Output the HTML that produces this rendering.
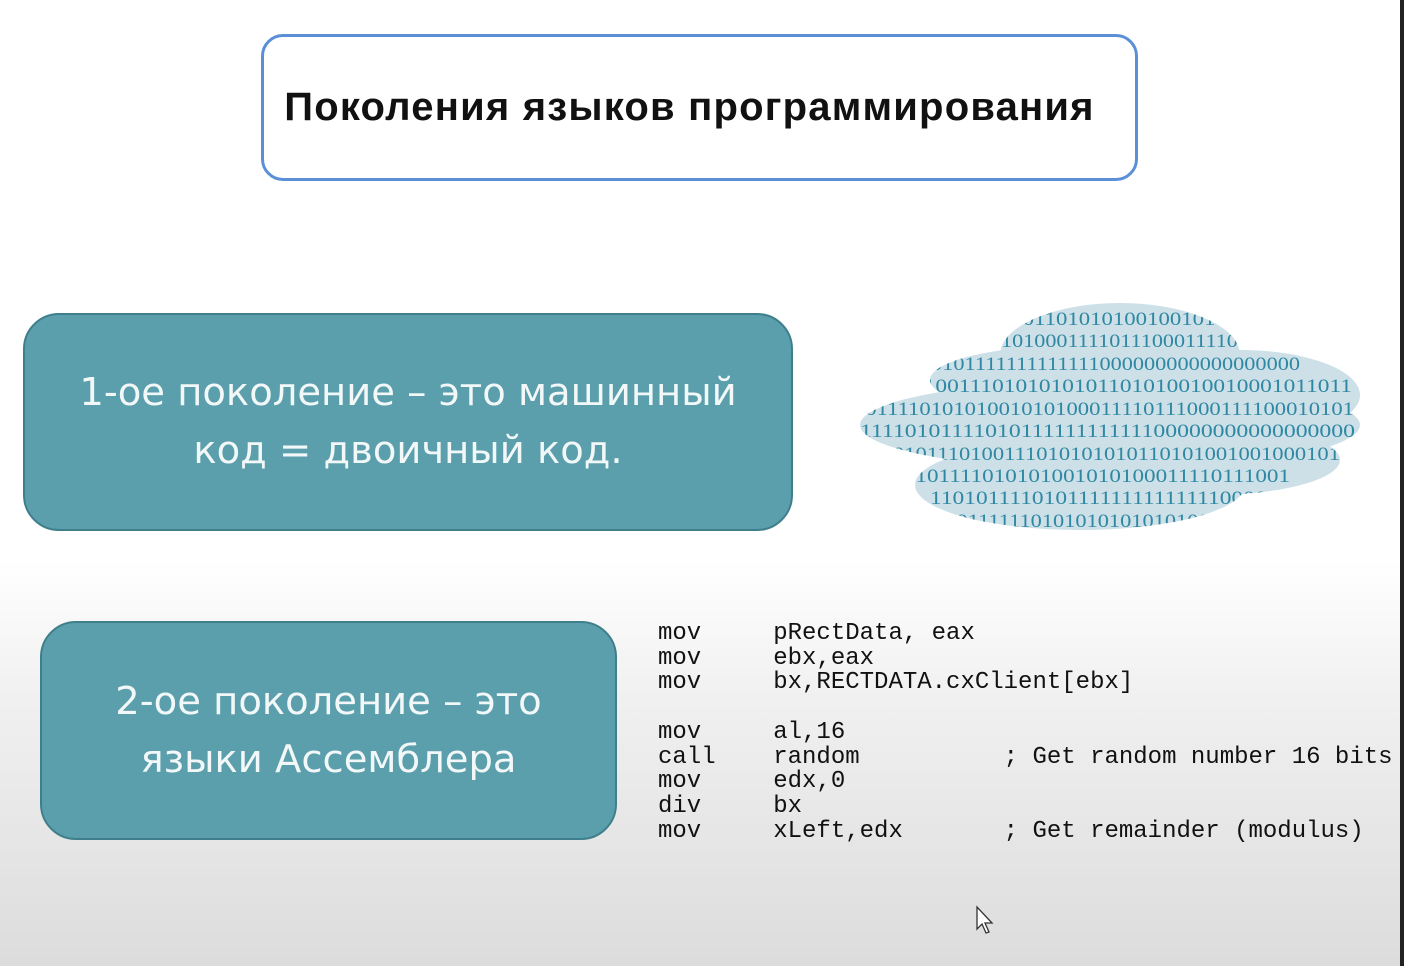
<!DOCTYPE html>
<html><head><meta charset="utf-8"><style>
body{margin:0;width:1404px;height:966px;overflow:hidden;font-family:"Liberation Sans",sans-serif;
background:linear-gradient(#fff 0,#fff 560px,#f0f0f0 700px,#dcdcdc 966px);position:relative}
.title{position:absolute;left:261px;top:34px;width:871px;height:141px;border:3px solid #5b8fd6;border-radius:22px;background:#fff;
display:flex;align-items:center;justify-content:center;font-weight:bold;font-size:40px;letter-spacing:1.2px;color:#111}
.title span{position:relative;left:-10px}
.box{position:absolute;background:#5b9fad;border:2px solid #3f7f8c;border-radius:36px;color:#f2f7f8;
font-family:"DejaVu Sans","Liberation Sans",sans-serif;font-size:38.5px;text-align:center;line-height:58px;display:flex;align-items:center;justify-content:center}
.code{position:absolute;left:658px;top:622px;font-family:"Liberation Mono",monospace;font-size:24px;line-height:24.7px;color:#111;white-space:pre}
.edge{position:absolute;right:0;top:0;width:4px;height:966px;background:#222}
</style></head><body>
<div class="title"><span>Поколения языков программирования</span></div>
<div class="box" style="left:23px;top:313px;width:766px;height:214px">1-ое поколение – это машинный<br>код = двоичный код.</div>
<div class="box" style="left:40px;top:621px;width:573px;height:215px">2-ое поколение – это<br>языки Ассемблера</div>
<svg style="position:absolute;left:850px;top:295px" width="520" height="250">
<defs><clipPath id="c">
<ellipse cx="260" cy="130" rx="250" ry="45"/><ellipse cx="270" cy="60" rx="120" ry="52"/><ellipse cx="230" cy="85" rx="150" ry="35"/>
<ellipse cx="390" cy="100" rx="120" ry="45"/><ellipse cx="230" cy="190" rx="165" ry="45"/><ellipse cx="360" cy="165" rx="130" ry="35"/>
</clipPath></defs>
<g clip-path="url(#c)"><rect width="520" height="250" fill="#cde0e8"/>
<g font-family="Liberation Serif,serif" font-size="19" fill="#2f88a3">
<text x="150" y="30" textLength="260" lengthAdjust="spacingAndGlyphs">01011010101001001010110</text>
<text x="140" y="52" textLength="270" lengthAdjust="spacingAndGlyphs">0101000111101110001111010</text>
<text x="70" y="75" textLength="380" lengthAdjust="spacingAndGlyphs">10101111111111111000000000000000000</text>
<text x="62" y="97" textLength="440" lengthAdjust="spacingAndGlyphs">01001110101010101101010010010001011011</text>
<text x="4" y="120" textLength="500" lengthAdjust="spacingAndGlyphs">101111010101001010100011110111000111100010101</text>
<text x="10" y="142" textLength="495" lengthAdjust="spacingAndGlyphs">1111010111101011111111111100000000000000000</text>
<text x="10" y="165" textLength="480" lengthAdjust="spacingAndGlyphs">0110101110100111010101010110101001001000101</text>
<text x="20" y="187" textLength="420" lengthAdjust="spacingAndGlyphs">1100101111010101001010100011110111001</text>
<text x="80" y="209" textLength="360" lengthAdjust="spacingAndGlyphs">11010111101011111111111111000000</text>
<text x="85" y="232" textLength="340" lengthAdjust="spacingAndGlyphs">1101111110101010101010100111010</text>
</g></g></svg>
<div class="code">mov     pRectData, eax
mov     ebx,eax
mov     bx,RECTDATA.cxClient[ebx]

mov     al,16
call    random          ; Get random number 16 bits
mov     edx,0
div     bx
mov     xLeft,edx       ; Get remainder (modulus)</div>
<svg style="position:absolute;left:975px;top:905px" width="20" height="30"><path d="M2 2 L2 24 L7 19 L11 28 L14 27 L10 18 L17 18 Z" fill="#fff" stroke="#333" stroke-width="1.3"/></svg>
<div class="edge"></div>
</body></html>
